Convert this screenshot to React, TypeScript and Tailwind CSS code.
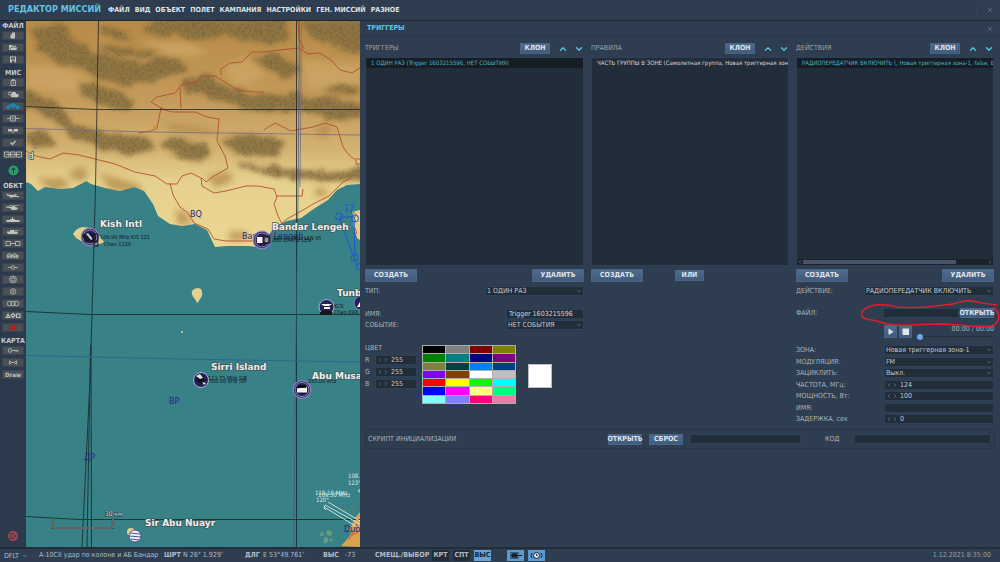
import type { ReactNode } from "react";
import { ChevronDown, ChevronLeft, ChevronRight, ChevronUp, X } from "lucide-react";

const menu = ["ФАЙЛ", "ВИД", "ОБЪЕКТ", "ПОЛЕТ", "КАМПАНИЯ", "НАСТРОЙКИ", "ГЕН. МИССИЙ", "РАЗНОЕ"];

const swatches = [
  "#000000", "#808080", "#800000", "#808000",
  "#008000", "#008080", "#000080", "#800080",
  "#808040", "#004040", "#0080ff", "#004080",
  "#8000ff", "#804000", "#ffffff", "#c0c0c0",
  "#ff0000", "#ffff00", "#00ff00", "#00ffff",
  "#0000ff", "#ff00ff", "#ffff80", "#00ff80",
  "#80ffff", "#8080ff", "#ff0080", "#e080a8",
];

const fileTools: [string, ReactNode][] = [
  ["Новый", <path d="M9 1.500h3v6H7.500V3.500h1.500z" fill="currentColor" stroke="none" />],
  ["Открыть", <path d="M6 2h3l.6.8H13v1H8L6.500 7H6zM8.500 4.500h6L13 7H7z" fill="currentColor" stroke="none" />],
  ["Сохранить", <path fillRule="evenodd" d="M7 1.500h6v6H7zM8 2.500v2h4v-2zM9 5.500v2h2.500v-2z" fill="currentColor" stroke="none" />],
];

const missionTools: [string, ReactNode][] = [
  ["Брифинг", <g><path d="M8 2.500h4.500v5H8zM9 1.500h2.500M9.500 4h1.500M9.500 5.500h1.500" /></g>],
  ["Погода", <g fill="currentColor" stroke="none"><circle cx="7" cy="3.500" r="1.600" fill="none" stroke="currentColor" /><circle cx="11" cy="4" r="2.300" /><circle cx="14" cy="5.500" r="1.700" /><rect x="8" y="4.500" width="6.500" height="2.700" rx="1" /></g>],
  ["Триггеры", <g stroke="#1591bd" strokeWidth="1.200"><path d="M3 5.500l3.500-2 3 1.500M17 5.500l-3.500-2-3 1.500M7 3.500Q10 0.500 13 3.500" /><circle cx="5.500" cy="5.500" r="1" /><circle cx="14.500" cy="5.500" r="1" /><circle cx="10" cy="4.500" r="1" /></g>],
  ["Цели", <g><path d="M7.500 2h5v5h-5zM4 4.500h3.500M12.500 4.500h4" /><path d="M9 3.500l2 2M11 3.500l-2 2" /></g>],
  ["Маршруты", <g fill="currentColor" stroke="none"><path d="M5 3h4v2.500H5zM11 3h4v2.500h-4zM9.500 4h1v3h-1z" /></g>],
  ["Проверка", <path d="M7.500 4.500l2 2 3-3.500" strokeWidth="1.300" />],
  ["Список", <g><path d="M1.500 2h4.500v5H1.500zM7.500 2h4.500v5H7.500zM13.500 2h5v5h-5zM3 4.500h14" /></g>],
];

const unitTools: [string, ReactNode][] = [
  ["Самолет", <path d="M3 2l2 1.500 5 .5 3-1 1 .5-2 1.500h4v1h-6L8 7l-.5-1L4 4.500z" fill="currentColor" stroke="none" />],
  ["Вертолет", <path d="M3 3.500h4l2 .5V3H6V2.500h10V3h-5l3 1.500 1 1.500-3 1H9L7 5 3 4.500z" fill="currentColor" stroke="none" />],
  ["Корабль", <path d="M3 5h4V4h2V2h1v2h2v1h5l-1 2H4z" fill="currentColor" stroke="none" />],
  ["Техника", <path d="M4 4.500h3V3h4v.5h5V4h-5v.5h3L15 6l-1 1H6L4 6z" fill="currentColor" stroke="none" />],
  ["Статика", <path d="M3 2.500h4.500v4H3zM12.500 2.500H17v4h-4.500zM7.500 4.500h5" />],
  ["Колонна", <g><path d="M4 5l1-2h3l1 2 1-2h3l1 2 1-1M4 5h12" /><circle cx="5" cy="6" r="1" /><circle cx="8" cy="6" r="1" /><circle cx="11" cy="6" r="1" /><circle cx="14" cy="6" r="1" /></g>],
  ["Точка", <g><circle cx="10" cy="4.500" r="1.700" /><path d="M5 4.500h3.300M11.700 4.500H15" /></g>],
  ["Зона", <g><circle cx="10" cy="4.500" r="3.400" /><circle cx="10" cy="4.500" r="1.700" /></g>],
  ["Цель", <g><circle cx="10" cy="4.500" r="2.700" /><circle cx="10" cy="4.500" r=".8" /></g>],
  ["Группа зон", <g><circle cx="6.500" cy="4.500" r="2.300" /><circle cx="10" cy="4.500" r="2.300" /><circle cx="13.500" cy="4.500" r="2.300" /></g>],
  ["Шаблон", <g strokeWidth="1.200"><path d="M5 3l1.700 3.500H3.300zM10 2.500l2 2-2 2-2-2zM13.500 3H17v3.500h-3.500z" /></g>],
  ["Удалить", <path d="M7.500 2l5 5M12.500 2l-5 5" stroke="#dd0a0a" strokeWidth="1.500" />],
];

const mapTools: [string, ReactNode][] = [
  ["Ключ", <g><circle cx="7" cy="4.500" r="1.800" /><path d="M9 4.500h6v1.500M13 4.500V6" /></g>],
  ["Линейка", <path d="M6.500 2.500v4M13.500 2.500v4M8 4.500h4M7 3l1.500 1.500L7 6M13 3l-1.500 1.500L13 6" />],
];

const labels: [string, number, number][] = [
  ["Kish Intl", 100, 227],
  ["Bandar Lengeh", 272, 230],
  ["Tunb", 337, 296],
  ["Sirri Island", 211, 370],
  ["Abu Musa", 312, 379],
  ["Sir Abu Nuayr", 145, 526],
];

const mountains = [
  "M30 28L60 24 78 40 90 52 110 57 140 65 165 57 178 58 190 72 170 74 148 80 125 84 98 80 85 68 60 64 40 50z",
  "M100 28L120 30 134 38 122 40 104 34z",
  "M102 46L130 48 158 52 150 56 112 55z",
  "M140 26L165 19H285L288 38 270 44 250 38 225 36 200 40 175 34 148 33z",
  "M306 22L364 18V50L345 53 325 40 308 34z",
  "M250 58L270 55 298 62 300 68 285 80 272 70 255 64z",
  "M76 86L92 84 120 92 135 104 128 109 100 105z",
  "M182 80L205 76 225 86 250 95 290 95 340 100 364 108V116L335 119 300 110 270 112 240 108 210 98 185 90z",
  "M22 92L50 100 65 112 72 124 95 130 120 136 150 140 155 150 130 154 100 148 75 136 50 118 22 102z",
  "M160 143L185 138 205 146 212 156 200 162 170 152z",
  "M220 138L240 134 265 138 285 142 280 152 258 158 232 152z",
  "M235 163L260 166 300 172 364 170V180L310 181 270 174z",
  "M26 132L45 134 56 142 48 148 26 144z",
  "M324 88L345 86 362 88 358 94 335 94z",
];

const foothills = [
  "M36 178l28 0 6 8-16 6z",
  "M70 172l12-6 6 8-6 8-12-4z",
  "M98 174l20 4 24 8-4 8-26-4z",
  "M206 176l22-4 6 8-18 8z",
  "M176 210l10 2 6 10-12 4-4-8z",
  "M316 130l12-6 4 6-10 8z",
  "M316 188l12 1-4 8-10-2z",
  "M228 232l16-1 6 8-20 2z",
  "M166 123l30 4 22 4-8 3-40-4z",
  "M325 86l35-1v8l-26 2z",
];

const roads = [
  "M26 151l10 5 14 3 13-6 16 2 16 4 20 5 20 8 20 4 12 8 10 0 5-8 9-3 12 6 3 3 8-6 14-8-3-12-8-15 2-22-12-2-12-5-22 0-8-2-14-8 6-5 18-4 6-8 16-3 4-6 14 0 10 6 12 8 18 2h9",
  "M221 75l0-6 9-6 12-1 10-10 13 0 14-2 20-2 9 6 12-1 12 8 8 9 12 3 8-5",
  "M180 88l1 20M161 108l-4 20-6 3-13 2",
  "M298 21l1 18 5 10",
  "M264 130l11-7 16 8 22-4 12-4 12 4 6 20 6 8 5 4h6M356 160v4h4",
  "M170 183l3 12 7 12 8 6 6 10 14 6 6 10 12 2 38 0 8-5 9-12 6-5 16-9 10-6 16-8 14-14 8-4",
  "M201 178l1 8 12 7 12-2 20-5 12 0 16 3 3 8-3 7 4 12 4 8M277 196l25 0 1-7",
];

function ToolGroup({ title, tools, children }: { title: string; tools: [string, ReactNode][]; children?: ReactNode }) {
  return (
    <section className="flex flex-col items-center gap-[3px]">
      <h2 className="-mb-[3px] h-[10px] text-[7px] leading-[10px] font-bold text-[#c3cad1]">{title}</h2>
      {tools.map(([name, icon]) => (
        <button key={name} aria-label={name} className="h-[9px] w-[22px] border border-[#3b434b] bg-[#4a5055] text-[#bfc2c0]">
          <svg viewBox="0 0 20 9" className="-mt-px h-[9px] w-5" fill="none" stroke="currentColor" strokeWidth=".8">
            {icon}
          </svg>
        </button>
      ))}
      {children}
    </section>
  );
}

function Airfield({ x, y, children }: { x: number; y: number; children: ReactNode }) {
  return (
    <g transform={`translate(${x} ${y})`}>
      <circle r="8.800" fill="#262154" stroke="#8b84c9" strokeWidth="1.200" />
      <circle r="7" fill="none" stroke="#b9b8dc" strokeWidth=".7" />
      {children}
    </g>
  );
}

function TerrainMap() {
  return (
    <svg
      viewBox="26 21 334 526"
      preserveAspectRatio="xMinYMin slice"
      className="h-full w-full"
      role="img"
      aria-label="Карта"
      fontFamily="DejaVu Sans Condensed, DejaVu Sans, sans-serif"
    >
      <defs>
        <linearGradient id="land" x1="0" y1="0" x2="0" y2="1">
          <stop offset="0" stopColor="#b78b48" />
          <stop offset=".35" stopColor="#c49b5b" />
          <stop offset=".55" stopColor="#d2b06f" />
          <stop offset=".7" stopColor="#e6d08d" />
          <stop offset="1" stopColor="#ebd793" />
        </linearGradient>
        {/* ragged, soft-edged relief with a fine grain inside it */}
        <filter id="relief" x="-5%" y="-5%" width="110%" height="110%" colorInterpolationFilters="sRGB">
          <feTurbulence type="fractalNoise" baseFrequency=".06 .09" numOctaves="4" seed="4" result="coarse" />
          <feDisplacementMap in="SourceGraphic" in2="coarse" scale="14" xChannelSelector="R" yChannelSelector="G" />
          <feGaussianBlur stdDeviation="2" result="shape" />
          <feTurbulence type="fractalNoise" baseFrequency=".4" numOctaves="3" seed="9" />
          <feColorMatrix values="0 0 0 0 .36  0 0 0 0 .36  0 0 0 0 .24  2 0 0 0 -.85" />
          <feComposite in2="shape" operator="in" result="grain" />
          <feMerge>
            <feMergeNode in="shape" />
            <feMergeNode in="grain" />
          </feMerge>
        </filter>
        <filter id="haze" x="-20%" y="-40%" width="140%" height="180%">
          <feGaussianBlur stdDeviation="3" />
        </filter>
        <clipPath id="coast">
          <path d="M26 21H360V184l-13 1-10 5-9 10-13 8-14 10-14 3-13 6-5 8-6 10-5 2-10-1-22 0-11 1-8-17-12-6-13 2-12-2-12-8-5-12-9-13-10-4-14 4-15-3-14-4-8-5H90l-9 5-8 4-13 1-15-2-7 4-7-7-5-2z" />
        </clipPath>
      </defs>
      <rect x="26" y="21" width="334" height="526" fill="#378187" />
      <g clipPath="url(#coast)">
        <rect x="26" y="21" width="334" height="228" fill="url(#land)" />
        <g filter="url(#haze)" fill="#a9803f" opacity=".65">
          {foothills.map((d) => <path key={d} d={d} />)}
        </g>
        <g filter="url(#haze)" fill="#cfa968" opacity=".7">
          <path d="M26 66l40 2 26 14-14 10-50-4zM224 66l26-10 16 20-30 12zM140 42l50 0 20 12-40 4zM300 60l60 4v26l-50-2z" />
        </g>
        <g filter="url(#haze)" fill="#a07a40" opacity=".5">
          {mountains.map((d) => <path key={d} d={d} />)}
        </g>
        <g filter="url(#relief)" fill="#8b7140" opacity=".8">
          {mountains.map((d) => <path key={d} d={d} />)}
        </g>
      </g>
      <g fill="#e5cf8c">
        <path d="M73 234q3-6 10-7 9 0 14 6 4 5 7 9-4 3-10 2-16-1-21-10z" />
        <path d="M192 291q4-5 9-2 3 6-1 10-2 4-3 4-1-3-3-5-3-4-2-7z" />
        <circle cx="182" cy="332" r="1" />
        <path d="M352 212l8-2v30l-3-2-3-10z" />
        <circle cx="131" cy="532" r="4" />
        <path d="M341 546l8-9 4-8-5 3 7-14 5-6v35z" fill="#d8a24e" />
      </g>
      <path d="M353 212l4 3-3 3 2 4M355 228l2 6M354 238l3 2M349 540l8-16M352 535l6-3M344 512l2-3M353 507l1 4" fill="none" stroke="#c75d33" />
      <g fill="#8fae7c" opacity=".55">
        <path d="M321 531l3 2-1 3-3 0zM327 530l4 1 2 4-4 1-3-2zM324 538l3-1 2 3-3 4-3-2zM330 538l3 1-1 3-2-1z" />
      </g>
      <g fill="none" stroke="#b24a2c" strokeWidth="1" strokeLinejoin="round" opacity=".85">
        {roads.map((d) => <path key={d} d={d} />)}
      </g>
      <g fill="#e58a2e"><circle cx="172" cy="88" r="1.500" /><circle cx="155" cy="127" r="1.500" /></g>

      <g fill="none" stroke="#15201f" strokeWidth="1" opacity=".75">
        <path d="M98.500 21L95.500 187 92 314 90 380 82 547M90.500 345L87 547M91 345L91.500 547" />
        <path d="M296.500 21V547M26 106.500L95 109.500H360M26 311.500L90 314.500H360M26 516.500L78 519.500H360" />
      </g>
      <path d="M299.500 21L298 200 295 400 294 547" fill="none" stroke="#3c5a7a" opacity=".7" />
      <path d="M26 128.500L150 132 360 135M301.500 21L300 187" fill="none" stroke="#7b6a86" opacity=".8" />
      <path d="M26 355.500L180 359 360 362" fill="none" stroke="#2c668f" />

      <g fontSize="9" fill="#27297f">
        <text x="190" y="217">BQ</text>
        <text x="242" y="239">Bandar Lengeh</text>
        <text x="169" y="404">BP</text>
        <text x="84" y="460">ДР</text>
        <text x="344" y="532">Dubai</text>
      </g>

      <Airfield x={90} y={237}>
        <path d="M-8-2l7-3 7 6-3 4H-5z" fill="#1a1730" /><path d="M-4-3l2-1 5 6-2 1z" fill="#c9c9d8" /><path d="M3-3h5v7H3zM4 5h4v4H4z" fill="none" stroke="#15151c" />
      </Airfield>
      <Airfield x={262} y={240}>
        <path d="M-5-3H2V3H-5z" fill="#eef0f3" /><path d="M1-4h7v7H1z" fill="#3c3b52" stroke="#15151c" /><path d="M3-2h3v4H3z" fill="#9a9aaa" />
      </Airfield>
      <g>
        <circle cx="326.500" cy="307" r="7.500" fill="#262154" stroke="#aeb2d8" />
        <path d="M321 304h11l-3 2h-5zM324 307h6v2h-6z" fill="#eef0f3" /><path d="M320 312l6-2 6 2v3h-12z" fill="#15151c" />
        <circle cx="361" cy="303" r="7" fill="#262154" stroke="#8b84c9" />
        <path d="M357 307l3-5v5z" fill="#fff" />
      </g>
      <g>
        <circle cx="201" cy="380" r="7.500" fill="#262154" stroke="#aeb2d8" />
        <path d="M196 377l4-2 5 4-2 5-5-2z" fill="#111118" /><path d="M196 376l4-2 3 4-3 1zM202 382l4 1-2 2z" fill="#e4e6ea" />
      </g>
      <Airfield x={302} y={389.500}>
        <path d="M-5-1L5-3V3H-5z" fill="#eef0f3" /><path d="M-4-4H4V-2H-4zM-3 4H3" stroke="#111118" strokeWidth=".8" />
      </Airfield>
      <g stroke="#4f5496">
        <circle cx="135" cy="536" r="6" fill="#f0f0f5" />
        <path d="M130 533l10 1M129 536l12 1M131 539l8 1" strokeWidth="1.200" />
      </g>

      <g fill="none" stroke="#1559d6">
        <path d="M339 217H354L355 257M339 217L357 266M354 217l-3-6" />
        <circle cx="339" cy="216.500" r="3.500" /><circle cx="355" cy="218.500" r="3.500" /><circle cx="354.500" cy="257.500" r="3.500" /><circle cx="360" cy="267" r="3.500" />
      </g>
      <text x="344" y="211" fontSize="9" fill="#1559d6">17</text>

      <g fontSize="5.500" fill="#10191b">
        <text x="100" y="239">109.90 MHz KIS 121</text>
        <text x="104" y="246">Chan 112X</text>
        <text x="273" y="240">114.80 MHz LEN 95</text>
        <text x="272" y="242">288.00 kHz LEN</text>
        <text x="334" y="308">KCK</text>
        <text x="334" y="314">Chan 89X</text>
        <text x="208" y="380">113.75 MHz SIR</text>
        <text x="209" y="383">300.00 kHz SIR</text>
        <text x="308" y="383">285.00 kHz</text>
      </g>

      <g fill="none" stroke="#d9eceb" strokeWidth=".9">
        <path d="M325 505L360 524M324 507L357 527M328 502L360 521M325 505l-1 3 2 2M360 489l-2 2 2 1" />
      </g>
      <g fontSize="6" fill="#d9eceb">
        <text x="348" y="478">108.</text>
        <text x="348" y="485">123°</text>
        <text x="315" y="495">110.10 MHz</text>
        <text x="318" y="497">109.50 MHz</text>
        <text x="316" y="502">120°</text>
      </g>

      <path d="M53 518V528H113V518" fill="none" stroke="#202b2c" strokeWidth="2.200" />
      <path d="M53 518V528H113V518" fill="none" stroke="#a89c93" strokeWidth="1" />
      <text x="105" y="516" fontSize="6.500" fill="#dfe6e4" stroke="#1f3335" strokeWidth="1" paintOrder="stroke">30 км</text>

      <g fontSize="9" fontWeight="bold" fill="#eceeec" stroke="#45595a" strokeWidth="1.500" paintOrder="stroke" fontFamily="DejaVu Sans, sans-serif">
        <text x="28" y="159" fontWeight="normal">d</text>
        {labels.map(([name, x, y]) => <text key={name} x={x} y={y}>{name}</text>)}
      </g>
    </svg>
  );
}

function Btn({ children, className }: { children: ReactNode; className: string }) {
  return (
    <button
      className={`${className} flex shrink-0 items-center justify-center border border-[#496484] bg-linear-to-b from-[#4f6b8f] to-[#425b7b] text-[7px] leading-none font-bold whitespace-nowrap text-[#dfe4ea]`}
    >
      {children}
    </button>
  );
}

function Pick({ id, value, className }: { id: string; value: string; className: string }) {
  return (
    <span className={`${className} relative block h-[10px] shrink-0`}>
      <select id={id} className="block h-full w-full appearance-none border border-[#2c4158] bg-[#222d3a] pl-px text-[7px] leading-[8px] text-[#c3cad1]">
        <option>{value}</option>
      </select>
      <ChevronDown className="pointer-events-none absolute top-[2px] right-[2px] size-[6px] text-[#8f9ba6]" strokeWidth={2} />
    </span>
  );
}

function Spin({ id, value, className }: { id: string; value: string; className: string }) {
  return (
    <span className={`${className} flex h-[10px] shrink-0 items-center border border-[#2c4158] bg-[#222d3a] pl-px`}>
      <button aria-label="Меньше" className="text-[#8f9ba6]"><ChevronLeft className="size-[6px]" /></button>
      <button aria-label="Больше" className="mr-[2px] text-[#8f9ba6]"><ChevronRight className="size-[6px]" /></button>
      <input id={id} defaultValue={value} className="h-[8px] w-0 grow text-[7px] leading-[8px] text-[#c3cad1]" />
    </span>
  );
}

const box = "block h-[10px] border border-[#2c4158] bg-[#222d3a] pl-[2px] text-[7px] leading-[8px] text-[#d3d8dc]";

function Row({ id, label, children }: { id: string; label: string; children: ReactNode }) {
  return (
    <div className="relative flex h-[10px] items-center justify-between">
      <label htmlFor={id} className="whitespace-nowrap text-[7px] leading-[10px] text-[#a9b3bb]">{label}</label>
      {children}
    </div>
  );
}

function ListHead({ title }: { title: string }) {
  return (
    <div className="flex h-[20px] items-center pt-[3px]">
      <h3 className="grow text-[7px] text-[#9aa5af]">{title}</h3>
      <Btn className="mr-[8px] h-[11px] w-[30px]">КЛОН</Btn>
      <button aria-label="Вверх" className="mr-[6px] text-[#5fc3e0]"><ChevronUp className="size-[10px]" strokeWidth={3} /></button>
      <button aria-label="Вниз" className="text-[#5fc3e0]"><ChevronDown className="size-[10px]" strokeWidth={3} /></button>
    </div>
  );
}

function List({ text, selected, scroll }: { text: string; selected?: boolean; scroll?: boolean }) {
  return (
    <div className="flex h-[209px] flex-col justify-between border border-[#2c4158] bg-[#222d3a]">
      <ul>
        <li className={selected ? "h-[10px] overflow-hidden bg-[#161d24] pl-[5px] text-[6px] leading-[10px] whitespace-nowrap text-[#45b5cd]" : "h-[10px] overflow-hidden pl-[5px] text-[6px] leading-[10px] whitespace-nowrap text-[#d3d8dc]"}>
          {text}
        </li>
      </ul>
      {scroll && (
        <div className="flex h-[6px] items-center bg-[#1a222b] text-[#8f9ba6]">
          <ChevronLeft className="size-[6px]" />
          <span className="flex grow"><span className="h-[4px] w-5/6 bg-[#455567]" /></span>
          <ChevronRight className="size-[6px]" />
        </div>
      )}
    </div>
  );
}

function TriggerColumn() {
  return (
    <section>
      <ListHead title="ТРИГГЕРЫ" />
      <List selected text="1 ОДИН РАЗ (Trigger 1603215596, НЕТ СОБЫТИЯ)" />
      <div className="mt-[3px] mb-[4px] flex justify-between">
        <Btn className="h-[13px] w-[52px]">СОЗДАТЬ</Btn>
        <Btn className="h-[13px] w-[52px]">УДАЛИТЬ</Btn>
      </div>
      <Row id="kind" label="ТИП:"><Pick id="kind" value="1 ОДИН РАЗ" className="w-[99px]" /></Row>
      <div className="mt-[13px] flex flex-col gap-px">
        <Row id="name" label="ИМЯ:"><input id="name" defaultValue="Trigger 1603215596" className={`${box} w-[78px]`} /></Row>
        <Row id="event" label="СОБЫТИЕ:"><Pick id="event" value="НЕТ СОБЫТИЯ" className="w-[78px]" /></Row>
      </div>
      <div className="mt-[15px] flex items-start">
        <div className="w-[57px] pr-[5px]">
          <h3 className="mb-px h-[9px] text-[7px] leading-none text-[#a9b3bb]">ЦВЕТ</h3>
          <div className="flex flex-col gap-[2px]">
            {["R", "G", "B"].map((c) => (
              <Row key={c} id={c} label={c}><Spin id={c} value="255" className="w-[42px]" /></Row>
            ))}
          </div>
        </div>
        <div className="grid h-[59px] w-[94px] grid-cols-4 grid-rows-7 gap-px border border-[#a9b0a8] bg-[#a9b0a8]">
          {swatches.map((color) => <button key={color} aria-label={color} style={{ backgroundColor: color }} />)}
        </div>
        <div className="mt-[19px] ml-[12px] size-[24px] border border-[#b9bec2] bg-white" />
      </div>
    </section>
  );
}

function RuleColumn() {
  return (
    <section>
      <ListHead title="ПРАВИЛА" />
      <List text="ЧАСТЬ ГРУППЫ В ЗОНЕ (Самолетная группа, Новая триггерная зона-1)" />
      <div className="mt-[3px] flex items-center gap-[32px]">
        <Btn className="h-[13px] w-[52px]">СОЗДАТЬ</Btn>
        <Btn className="h-[11px] w-[29px]">ИЛИ</Btn>
      </div>
    </section>
  );
}

function ActionColumn() {
  return (
    <section>
      <ListHead title="ДЕЙСТВИЯ" />
      <List selected scroll text="РАДИОПЕРЕДАТЧИК ВКЛЮЧИТЬ (, Новая триггерная зона-1, false, Выкл" />
      <div className="mt-[3px] mb-[4px] flex justify-between">
        <Btn className="h-[13px] w-[52px]">СОЗДАТЬ</Btn>
        <Btn className="h-[13px] w-[52px]">УДАЛИТЬ</Btn>
      </div>
      <Row id="action" label="ДЕЙСТВИЕ:"><Pick id="action" value="РАДИОПЕРЕДАТЧИК ВКЛЮЧИТЬ" className="w-[130px]" /></Row>
      <div className="mt-[12px]">
        <Row id="file" label="ФАЙЛ:">
          <span className="flex gap-px">
            <input id="file" className={`${box} w-[76px]`} />
            <Btn className="h-[10px] w-[34px]">ОТКРЫТЬ</Btn>
          </span>
          <svg viewBox="860 298 140 30" className="pointer-events-none absolute -top-[10px] -right-[6px] h-[30px] w-[140px]" fill="none" stroke="#dc1f2a" strokeWidth="1.700" strokeLinecap="round">
            <path d="M997 305Q985 304 975 301.500 965 300 958 302.500 952 305 944 305 936 306 926 307 912 308 897 307 887 304 876 305 866 306 862 312 860 317 866 319 875 320 887 324 900 326 913 325 928 324 944 324L965 325.500Q982 327 991 326 998 325 999 317 998 311 994 308" />
          </svg>
        </Row>
      </div>
      <div className="mt-[7px] ml-auto flex h-[14px] w-[110px] gap-[2px]">
        <Btn className="h-[13px] w-[13px]">
          <svg viewBox="0 0 11 11" className="size-[11px] shrink-0" aria-label="Воспроизвести"><path d="M3.500 2.500v6.500l5-3.200z" fill="#dfe4ea" /></svg>
        </Btn>
        <Btn className="h-[13px] w-[13px]">
          <svg viewBox="0 0 11 11" className="size-[11px] shrink-0" aria-label="Стоп"><path d="M2.500 2.500h6.500v6.500H2.500z" fill="#dfe4ea" /></svg>
        </Btn>
        <div className="ml-[3px] grow">
          <p className="h-[8px] text-right text-[7px] leading-[8px] text-[#a9b3bb]">00:00 / 00:00</p>
          <input
            type="range"
            aria-label="Позиция"
            defaultValue="0"
            className="block h-[6px] w-full appearance-none bg-transparent [&::-webkit-slider-runnable-track]:h-px [&::-webkit-slider-runnable-track]:bg-[#24303d] [&::-webkit-slider-thumb]:-mt-[2px] [&::-webkit-slider-thumb]:size-[6px] [&::-webkit-slider-thumb]:appearance-none [&::-webkit-slider-thumb]:rounded-full [&::-webkit-slider-thumb]:bg-[#6ea5e2]"
          />
        </div>
      </div>
      <div className="mt-[6px] flex h-[79px] flex-col justify-between">
        <Row id="zone" label="ЗОНА:"><Pick id="zone" value="Новая триггерная зона-1" className="w-[110px]" /></Row>
        <Row id="mod" label="МОДУЛЯЦИЯ:"><Pick id="mod" value="FM" className="w-[110px]" /></Row>
        <Row id="loop" label="ЗАЦИКЛИТЬ:"><Pick id="loop" value="Выкл." className="w-[110px]" /></Row>
        <Row id="freq" label="ЧАСТОТА, МГц:"><Spin id="freq" value="124" className="w-[110px]" /></Row>
        <Row id="power" label="МОЩНОСТЬ, Вт:"><Spin id="power" value="100" className="w-[110px]" /></Row>
        <Row id="aname" label="ИМЯ:"><input id="aname" className={`${box} w-[110px]`} /></Row>
        <Row id="delay" label="ЗАДЕРЖКА, сек"><Spin id="delay" value="0" className="w-[110px]" /></Row>
      </div>
    </section>
  );
}

function StatusBar() {
  return (
    <footer className="flex h-[15px] shrink-0 items-center border-t-2 border-[#222e3a] text-[7px] whitespace-nowrap text-[#b4bcc4]">
      <span className="relative ml-[4px] w-[35px]">
        <select aria-label="Слой" className="block w-[24px] appearance-none text-[7px] leading-[10px]">
          <option>DFLT</option>
        </select>
        <ChevronDown className="pointer-events-none absolute top-[2px] left-[18px] size-[6px]" />
      </span>
      <span className="w-[125px]">А-10СII удар по колоне и АБ Бандар</span>
      <b className="w-[19px]">ШРТ</b>
      <span className="w-[62px]">N 26° 1.929'</span>
      <b className="w-[18px]">ДЛГ</b>
      <span className="w-[60px]">E 53°49.761'</span>
      <b className="w-[22px]">ВЫС</b>
      <span className="w-[30px]">-73</span>
      <b className="w-[57px]">СМЕЩ./ВЫБОР</b>
      <span className="flex gap-[4px]">
        <button className="h-[11px] w-[17px] bg-[#222c37] text-center font-bold">КРТ</button>
        <button className="h-[11px] w-[17px] bg-[#222c37] text-center font-bold">СПТ</button>
        <button className="h-[11px] w-[17px] bg-[#65a3d8] text-center font-bold text-[#162636]">ВЫС</button>
      </span>
      <span className="ml-[16px] flex gap-[4px]">
        <button aria-label="Наземные" className="h-[11px] w-[17px] bg-[#5a9ad0]">
          <svg viewBox="0 0 17 11" className="h-[11px] w-[17px]" fill="none" stroke="#16222e"><path d="M3 3h9M3 8h9M3 5.500h12" /><path d="M5 4h5v3H5z" fill="#16222e" /></svg>
        </button>
        <button aria-label="Время" className="h-[11px] w-[17px] bg-[#5a9ad0]">
          <svg viewBox="0 0 17 11" className="h-[11px] w-[17px]" fill="none" stroke="#16222e"><circle cx="8.500" cy="5.500" r="3" fill="#d5e6f4" /><path d="M8.500 4v1.500h1M4 3q-2 2.500 0 5M13 3q2 2.500 0 5" /></svg>
        </button>
      </span>
      <time className="mr-[9px] ml-auto text-[#95a1ac]">1.12.2021 8:35:00</time>
    </footer>
  );
}

export default function App() {
  return (
    <div className="flex h-screen flex-col overflow-hidden bg-[#2e3e50] font-['DejaVu_Sans_Condensed','DejaVu_Sans',sans-serif] text-[#a9b3bb]">
      <header className="flex h-[21px] shrink-0 items-center border-b border-[#1d252c] pl-[8px]">
        <h1 className="w-[100px] text-[9px] font-bold whitespace-nowrap text-[#62c4e4]">РЕДАКТОР МИССИЙ</h1>
        <nav className="flex gap-[5px] text-[7px] font-bold whitespace-nowrap text-[#dfe3e7]">
          {menu.map((item) => <a key={item} href="#">{item}</a>)}
        </nav>
        <button aria-label="Закрыть редактор" className="mr-[6px] ml-auto border-l border-[#3c4c5c] pl-[8px] text-[#66788a]"><X className="size-[8px]" /></button>
      </header>

      <main className="flex min-h-0 grow">
        <aside className="flex w-[26px] shrink-0 flex-col gap-[4px] bg-[#2b3b4d] pb-[6px]">
          <ToolGroup title="ФАЙЛ" tools={fileTools} />
          <ToolGroup title="МИС" tools={missionTools}>
            <button aria-label="Старт" className="mt-[3px] mb-px size-[11px]">
              <svg viewBox="0 0 11 11" className="size-[11px]"><circle cx="5.500" cy="5.500" r="5" fill="#2f9b67" /><path d="M5.500 8.500V3M3.300 5l2.200-2.200L7.700 5" fill="none" stroke="#173f34" /></svg>
            </button>
          </ToolGroup>
          <ToolGroup title="ОБКТ" tools={unitTools} />
          <ToolGroup title="КАРТА" tools={mapTools}>
            <button className="h-[9px] w-[22px] border border-[#3b434b] bg-[#4a5055] text-[6px] leading-[7px] font-bold text-[#bfc2c0]">Draw</button>
          </ToolGroup>
          <button aria-label="Выход" className="mx-auto mt-auto size-[10px]">
            <svg viewBox="0 0 10 10" className="size-[10px]" fill="none" stroke="#33272f" strokeWidth=".8"><circle cx="5" cy="5" r="5" fill="#a34a52" stroke="none" /><path d="M6.500 2.500H2.500v5h4M4 5h4.500M7 3.500L8.500 5 7 6.500" /></svg>
          </button>
        </aside>

        <div className="min-w-0 flex-[334] overflow-hidden">
          <TerrainMap />
        </div>

        <div className="min-w-0 flex-[640]">
          <div className="flex h-[16px] items-center justify-between border-b border-[#283747] pr-[6px] pl-[7px]">
            <h2 className="text-[7px] font-bold text-[#62c4e4]">ТРИГГЕРЫ</h2>
            <button aria-label="Закрыть" className="text-[#66788a]"><X className="size-[8px]" /></button>
          </div>
          <div className="grid grid-cols-[minmax(0,219fr)_minmax(0,198fr)_minmax(0,198fr)] gap-[7px] pr-[6px] pl-[5px]">
            <TriggerColumn />
            <RuleColumn />
            <ActionColumn />
          </div>
          <div className="mx-[5px] mt-[5px] flex h-[20px] items-center border border-[#273544] pr-[3px] pl-[2px] text-[7px] whitespace-nowrap">
            <label htmlFor="script" className="grow">СКРИПТ ИНИЦИАЛИЗАЦИИ</label>
            <Btn className="mr-[7px] h-[11px] w-[34px]">ОТКРЫТЬ</Btn>
            <Btn className="mr-[7px] h-[11px] w-[34px]">СБРОС</Btn>
            <input id="script" className={`${box} w-[111px]`} />
            <label htmlFor="code" className="w-[53px] pl-[24px]">КОД</label>
            <input id="code" className={`${box} w-[137px]`} />
          </div>
        </div>
      </main>
      <StatusBar />
    </div>
  );
}
